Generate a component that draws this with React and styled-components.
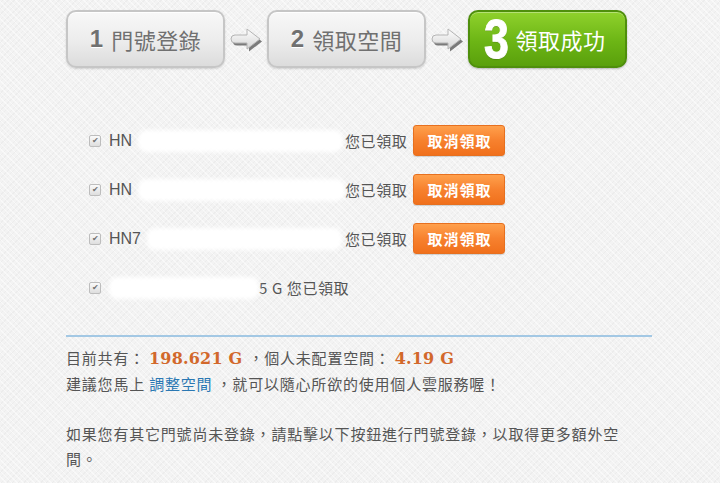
import React from "react";
import styled, { createGlobalStyle } from "styled-components";

const GlobalStyle = createGlobalStyle`
  html, body {
    margin: 0;
    padding: 0;
    background: #f3f3f3;
  }
  body {
    font-family: "Liberation Sans", "Noto Sans CJK TC", sans-serif;
    color: #555555;
  }
`;

const steps = [
  { num: "1", label: "門號登錄" },
  { num: "2", label: "領取空間" },
  { num: "3", label: "領取成功", active: true },
];

const rows = [
  { prefix: "HN", mask: 205, cancel: true },
  { prefix: "HN", mask: 215, cancel: true },
  { prefix: "HN7", mask: 195, cancel: true },
];

const Arrow = () => (
  <ArrowBox>
    <svg width="36" height="28" viewBox="0 0 36 28">
      <defs>
        <linearGradient id="arrowFill" x1="0" y1="0" x2="0" y2="1">
          <stop offset="0" stopColor="#ffffff" />
          <stop offset="1" stopColor="#d4d4d4" />
        </linearGradient>
      </defs>
      <path
        d="M7 9 H19 V3 L32 13 L19 23 V17 H7 Q3 17 3 13 Q3 9 7 9 Z"
        fill="#7a7a7a"
        transform="translate(2 2.5)"
      />
      <path
        d="M7 9 H19 V3 L32 13 L19 23 V17 H7 Q3 17 3 13 Q3 9 7 9 Z"
        fill="url(#arrowFill)"
        stroke="#b4b4b4"
        strokeWidth="1"
        strokeLinejoin="round"
      />
    </svg>
  </ArrowBox>
);

const App = () => {
  return (
    <Page>
      <GlobalStyle />
      <Steps>
        {steps.map((s, i) => (
          <React.Fragment key={s.num}>
            {i > 0 && <Arrow />}
            <Step $active={s.active}>
              <StepNum $active={s.active}>{s.num}</StepNum>
              <StepLabel>{s.label}</StepLabel>
            </Step>
          </React.Fragment>
        ))}
      </Steps>

      <List>
        {rows.map((r, i) => (
          <Row key={i}>
            <Check>✔</Check>
            <Name>
              {r.prefix}
              <Mask style={{ width: r.mask }} />
            </Name>
            <Status>您已領取</Status>
            <CancelButton>取消領取</CancelButton>
          </Row>
        ))}
        <Row>
          <Check>✔</Check>
          <Mask style={{ width: 150, marginLeft: 0 }} />
          <Status>5 G 您已領取</Status>
        </Row>
      </List>

      <Divider />

      <Info>
        <Line>
          目前共有：<Amount>198.621 G</Amount>，個人未配置空間：<Amount>4.19 G</Amount>
        </Line>
        <Line>
          建議您馬上 <Link>調整空間</Link> ，就可以隨心所欲的使用個人雲服務喔！
        </Line>
        <Para>
          如果您有其它門號尚未登錄，請點擊以下按鈕進行門號登錄，以取得更多額外空間。
        </Para>
      </Info>
    </Page>
  );
};

export default App;

const Page = styled.div`
  width: 720px;
  height: 483px;
  overflow: hidden;
  box-sizing: border-box;
  padding: 10px 0 0 66px;
  background-color: #f3f3f3;
  background-image: repeating-linear-gradient(
      45deg,
      rgba(255, 255, 255, 0.5) 0px,
      rgba(255, 255, 255, 0.5) 1px,
      transparent 1px,
      transparent 4px
    ),
    repeating-linear-gradient(
      -45deg,
      rgba(230, 230, 230, 0.5) 0px,
      rgba(230, 230, 230, 0.5) 1px,
      transparent 1px,
      transparent 4px
    );
`;

const Steps = styled.div`
  display: flex;
  align-items: center;
  height: 58px;
`;

const Step = styled.div`
  box-sizing: border-box;
  width: 159px;
  height: 58px;
  border-radius: 10px;
  display: flex;
  align-items: center;
  justify-content: center;
  gap: 8px;
  border: 2px solid ${(p) => (p.$active ? "#4f8f0c" : "#c6c6c6")};
  background: ${(p) =>
    p.$active
      ? "linear-gradient(#8fd12c, #6cb515 55%, #5aa00c)"
      : "linear-gradient(#f8f8f8, #ececec 55%, #dcdcdc)"};
  box-shadow: ${(p) =>
    p.$active
      ? "inset 0 1px 0 rgba(255,255,255,0.35), 0 1px 2px rgba(0,0,0,0.25)"
      : "inset 0 1px 0 #ffffff, 0 1px 2px rgba(0,0,0,0.15)"};
  color: ${(p) => (p.$active ? "#ffffff" : "#707070")};
  padding-right: ${(p) => (p.$active ? "4px" : "0")};
`;

const StepNum = styled.span`
  font-family: "Liberation Sans", "Noto Sans CJK TC", sans-serif;
  font-weight: 900;
  font-size: ${(p) => (p.$active ? "56px" : "24px")};
  line-height: 1;
  display: inline-block;
  transform: ${(p) => (p.$active ? "scaleX(0.8)" : "none")};
  margin: ${(p) => (p.$active ? "0 -5px 0 -4px" : "0")};
  -webkit-text-stroke: ${(p) => (p.$active ? "1px #ffffff" : "0")};
  text-shadow: ${(p) => (p.$active ? "0 1px 1px rgba(0,0,0,0.3)" : "0 1px 0 #fff")};
`;

const StepLabel = styled.span`
  font-family: "Noto Sans CJK TC", sans-serif;
  font-size: 22px;
  line-height: 1;
  letter-spacing: 0.5px;
`;

const ArrowBox = styled.div`
  width: 42px;
  display: flex;
  justify-content: center;
  padding-top: 2px;
`;

const List = styled.div`
  margin-top: 57px;
  padding-left: 23px;
  display: flex;
  flex-direction: column;
  gap: 18px;
`;

const Row = styled.div`
  display: flex;
  align-items: center;
  height: 31px;
  font-size: 15px;
  color: #555555;
`;

const Check = styled.span`
  box-sizing: border-box;
  width: 12px;
  height: 12px;
  border: 1px solid #bdbdbd;
  border-radius: 2px;
  background: linear-gradient(#fafafa, #dedede);
  color: #707070;
  font-size: 8px;
  line-height: 10px;
  text-align: center;
  margin-right: 8px;
`;

const Name = styled.span`
  width: 236px;
  display: flex;
  align-items: center;
  font-family: "Liberation Sans", "Noto Sans CJK TC", sans-serif;
  font-size: 16px;
`;

const Mask = styled.span`
  display: inline-block;
  height: 22px;
  margin-left: 6px;
  background: #ffffff;
  border-radius: 8px;
  filter: blur(2px);
`;

const Status = styled.span`
  font-family: "Noto Sans CJK TC", sans-serif;
  font-size: 15px;
  letter-spacing: 0.6px;
`;

const CancelButton = styled.button`
  box-sizing: border-box;
  margin-left: 6px;
  width: 92px;
  height: 31px;
  border: 1px solid #e7701f;
  border-radius: 3px;
  background: linear-gradient(#ffa04c, #f7812e 50%, #f0701c);
  box-shadow: 0 1px 1px rgba(0, 0, 0, 0.15);
  color: #ffffff;
  font-family: "Noto Sans CJK TC", sans-serif;
  font-weight: bold;
  font-size: 15px;
  letter-spacing: 1px;
  padding: 0;
  cursor: pointer;
`;

const Divider = styled.div`
  width: 586px;
  height: 2px;
  background: #a3c8e4;
  margin-top: 32px;
`;

const Info = styled.div`
  margin-top: 8px;
  width: 572px;
  font-family: "Noto Sans CJK TC", sans-serif;
  font-size: 15px;
  line-height: 25px;
  letter-spacing: 0.8px;
  color: #555555;
`;

const Line = styled.div``;

const Para = styled.p`
  margin: 25px 0 0;
`;

const Amount = styled.span`
  font-family: "DejaVu Serif", "Liberation Serif", serif;
  font-weight: bold;
  font-size: 16px;
  letter-spacing: 0.2px;
  color: #d2682b;
  margin: 0 6px 0 4px;
`;

const Link = styled.a`
  color: #2b78b3;
  cursor: pointer;
`;
